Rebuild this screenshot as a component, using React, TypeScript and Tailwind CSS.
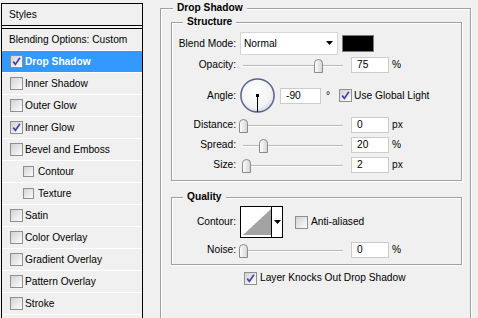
import React from "react";

function Check({ checked, small }: { checked?: boolean; small?: boolean }) {
  return (
    <span
      className={
        "inline-flex shrink-0 items-center justify-center border border-[#8e8f8f] bg-linear-to-br from-[#d2d2d2] to-[#fdfdfd] " +
        (small ? "w-[11px] h-[11px]" : "w-[13px] h-[13px]")
      }
    >
      {checked && (
        <svg width="9" height="9" viewBox="0 0 9 9">
          <path d="M1.2 4.6 L3.4 7.4 L7.9 0.8" stroke="#3b46a6" strokeWidth="1.7" fill="none" />
        </svg>
      )}
    </span>
  );
}

function Slider({ value }: { value: number }) {
  return (
    <div className="relative ml-[7px] w-[100px] h-[20px] shrink-0">
      <div className="absolute left-0 right-0 top-[10px] h-[2px] border-t border-[#b8b8b8] border-b border-b-white" />
      <svg
        className="absolute top-[4px]"
        style={{ left: value - 4 }}
        width="9"
        height="14"
        viewBox="0 0 9 14"
      >
        <defs>
          <linearGradient id="thg" x1="0" y1="0" x2="1" y2="0">
            <stop offset="0" stopColor="#ffffff" />
            <stop offset="1" stopColor="#d4d4d4" />
          </linearGradient>
        </defs>
        <path
          d="M0.5 13.5 V4.2 Q0.5 0.5 4.5 0.5 Q8.5 0.5 8.5 4.2 V13.5 Z"
          fill="url(#thg)"
          stroke="#8a8a8a"
        />
      </svg>
    </div>
  );
}

function NumBox({ v, w = 38, ml = 8 }: { v: string; w?: number; ml?: number }) {
  return (
    <div
      className={
        "h-[16px] bg-white border border-[#cbcbcb] flex items-center pl-[5px] shrink-0 " +
        (w === 41 ? "w-[41px] " : "w-[38px] ") +
        (ml === 5 ? "ml-[5px]" : "ml-[8px]")
      }
    >
      {v}
    </div>
  );
}

function Label({ children }: { children: React.ReactNode }) {
  return <div className="w-[64px] text-right shrink-0">{children}</div>;
}

function SliderRow({
  label,
  value,
  unit,
  pos,
}: {
  label: string;
  value: number;
  unit: string;
  pos?: number;
}) {
  return (
    <div className="h-[20px] flex items-center">
      <Label>{label}</Label>
      <Slider value={pos ?? value} />
      <NumBox v={String(value)} />
      <span className="ml-[3px]">{unit}</span>
    </div>
  );
}

const etched = "border border-[#a0a0a0] shadow-[inset_1px_1px_0_#fff,1px_1px_0_#fff]";

function Legend({ children, left }: { children: React.ReactNode; left: "outer" | "inner" }) {
  return (
    <div
      className={
        "absolute top-[-7px] px-[4px] bg-[#f0f0f0] font-bold leading-[12px] " +
        (left === "outer" ? "left-[12px]" : "left-[11px]")
      }
    >
      {children}
    </div>
  );
}

const items: { label: string; checked?: boolean; sub?: boolean; active?: boolean }[] = [
  { label: "Drop Shadow", checked: true, active: true },
  { label: "Inner Shadow" },
  { label: "Outer Glow" },
  { label: "Inner Glow", checked: true },
  { label: "Bevel and Emboss" },
  { label: "Contour", sub: true },
  { label: "Texture", sub: true },
  { label: "Satin" },
  { label: "Color Overlay" },
  { label: "Gradient Overlay" },
  { label: "Pattern Overlay" },
  { label: "Stroke" },
  { label: "" },
];

export default function App() {
  return (
    <div className="w-[478px] h-[318px] bg-[#f0f0f0] overflow-hidden flex items-start font-['Liberation_Sans',Arial,sans-serif] text-[10.2px] leading-[12px] text-black">
      {/* Left styles list */}
      <div className="ml-[1px] mt-[3px] w-[142px] shrink-0 border-x border-t border-black">
        <div className="h-[21px] flex items-center pl-[7px]">Styles</div>
        <div className="h-[4px] border-y border-black bg-[#f4f4f4]" />
        <div className="h-[22px] flex items-center pl-[7px] border-b border-white">
          Blending Options: Custom
        </div>
        {items.map((it, i) => (
          <div
            key={i}
            className={
              "h-[22px] flex items-center border-b border-white " +
              (it.sub ? "pl-[21px] gap-[4px] " : "pl-[8px] gap-[2px] ") +
              (it.active ? "bg-[#3399ff] text-white font-bold" : "")
            }
          >
            {it.label && <Check checked={it.checked} small={it.sub} />}
            <span>{it.label}</span>
          </div>
        ))}
      </div>

      {/* Right settings */}
      <div className="relative ml-[17px] mt-[8px] w-[311px] h-[330px] shrink-0 border-x border-t border-[#a0a0a0] shadow-[inset_1px_1px_0_#fff,1px_0_0_#fff]">
        <Legend left="outer">Drop Shadow</Legend>

        {/* Structure */}
        <div className={"relative mt-[13px] ml-[10px] w-[291px] h-[159px] pt-[9px] " + etched}>
          <Legend left="inner">Structure</Legend>
          <div className="h-[23px] flex items-center">
            <Label>Blend Mode:</Label>
            <div className="ml-[4px] w-[98px] h-[23px] bg-white border border-[#d6d6d6] flex items-center justify-between pl-[3px] pr-[3px] shrink-0">
              <span>Normal</span>
              <svg width="8" height="5" viewBox="0 0 8 5">
                <path d="M0 0 H7 L3.5 4 Z" fill="#000" />
              </svg>
            </div>
            <div className="ml-[4px] w-[32px] h-[17px] bg-black border border-[#7a7a7a] shrink-0" />
          </div>
          <SliderRow label="Opacity:" value={75} unit="%" />
          <div className="mt-[3px] h-[35px] flex items-center">
            <Label>Angle:</Label>
            <svg className="ml-[4px] shrink-0" width="35" height="35" viewBox="0 0 35 35">
              <defs>
                <radialGradient id="dial" cx="0.45" cy="0.4" r="0.6">
                  <stop offset="0" stopColor="#ffffff" />
                  <stop offset="0.75" stopColor="#f3f3f3" />
                  <stop offset="1" stopColor="#d9dbe0" />
                </radialGradient>
              </defs>
              <circle cx="17.5" cy="17.5" r="16.6" fill="url(#dial)" stroke="#56648e" strokeWidth="1.5" />
              <rect x="16" y="16" width="3" height="3" fill="#000" />
              <rect x="17" y="17" width="1" height="17" fill="#000" />
            </svg>
            <NumBox v="-90" w={41} ml={5} />
            <span className="ml-[5px]">°</span>
            <span className="ml-[9px] flex items-center gap-[2px]">
              <Check checked />
              <span>Use Global Light</span>
            </span>
          </div>
          <div className="mt-[2px]">
            <SliderRow label="Distance:" value={0} unit="px" />
            <SliderRow label="Spread:" value={20} unit="%" />
            <SliderRow label="Size:" value={2} pos={3} unit="px" />
          </div>
        </div>

        {/* Quality */}
        <div className={"relative mt-[16px] ml-[10px] w-[291px] h-[68px] pt-[8px] " + etched}>
          <Legend left="inner">Quality</Legend>
          <div className="h-[32px] flex items-center">
            <Label>Contour:</Label>
            <div className="ml-[4px] w-[43px] h-[32px] border border-black bg-white flex shrink-0">
              <svg width="30" height="30" viewBox="0 0 30 30">
                <polygon points="2,28 30,2 30,28" fill="#a3a3a3" />
              </svg>
              <div className="w-[11px] h-full border-l border-black flex items-center justify-center">
                <svg width="7" height="4" viewBox="0 0 7 4">
                  <path d="M0 0 H7 L3.5 4 Z" fill="#000" />
                </svg>
              </div>
            </div>
            <span className="ml-[12px] flex items-center gap-[3px]">
              <Check />
              <span>Anti-aliased</span>
            </span>
          </div>
          <div className="mt-[2px]">
            <SliderRow label="Noise:" value={0} unit="%" />
          </div>
        </div>

        <div className="mt-[3px] ml-[83px] h-[20px] flex items-center gap-[3px]">
          <Check checked />
          <span>Layer Knocks Out Drop Shadow</span>
        </div>
      </div>
    </div>
  );
}
